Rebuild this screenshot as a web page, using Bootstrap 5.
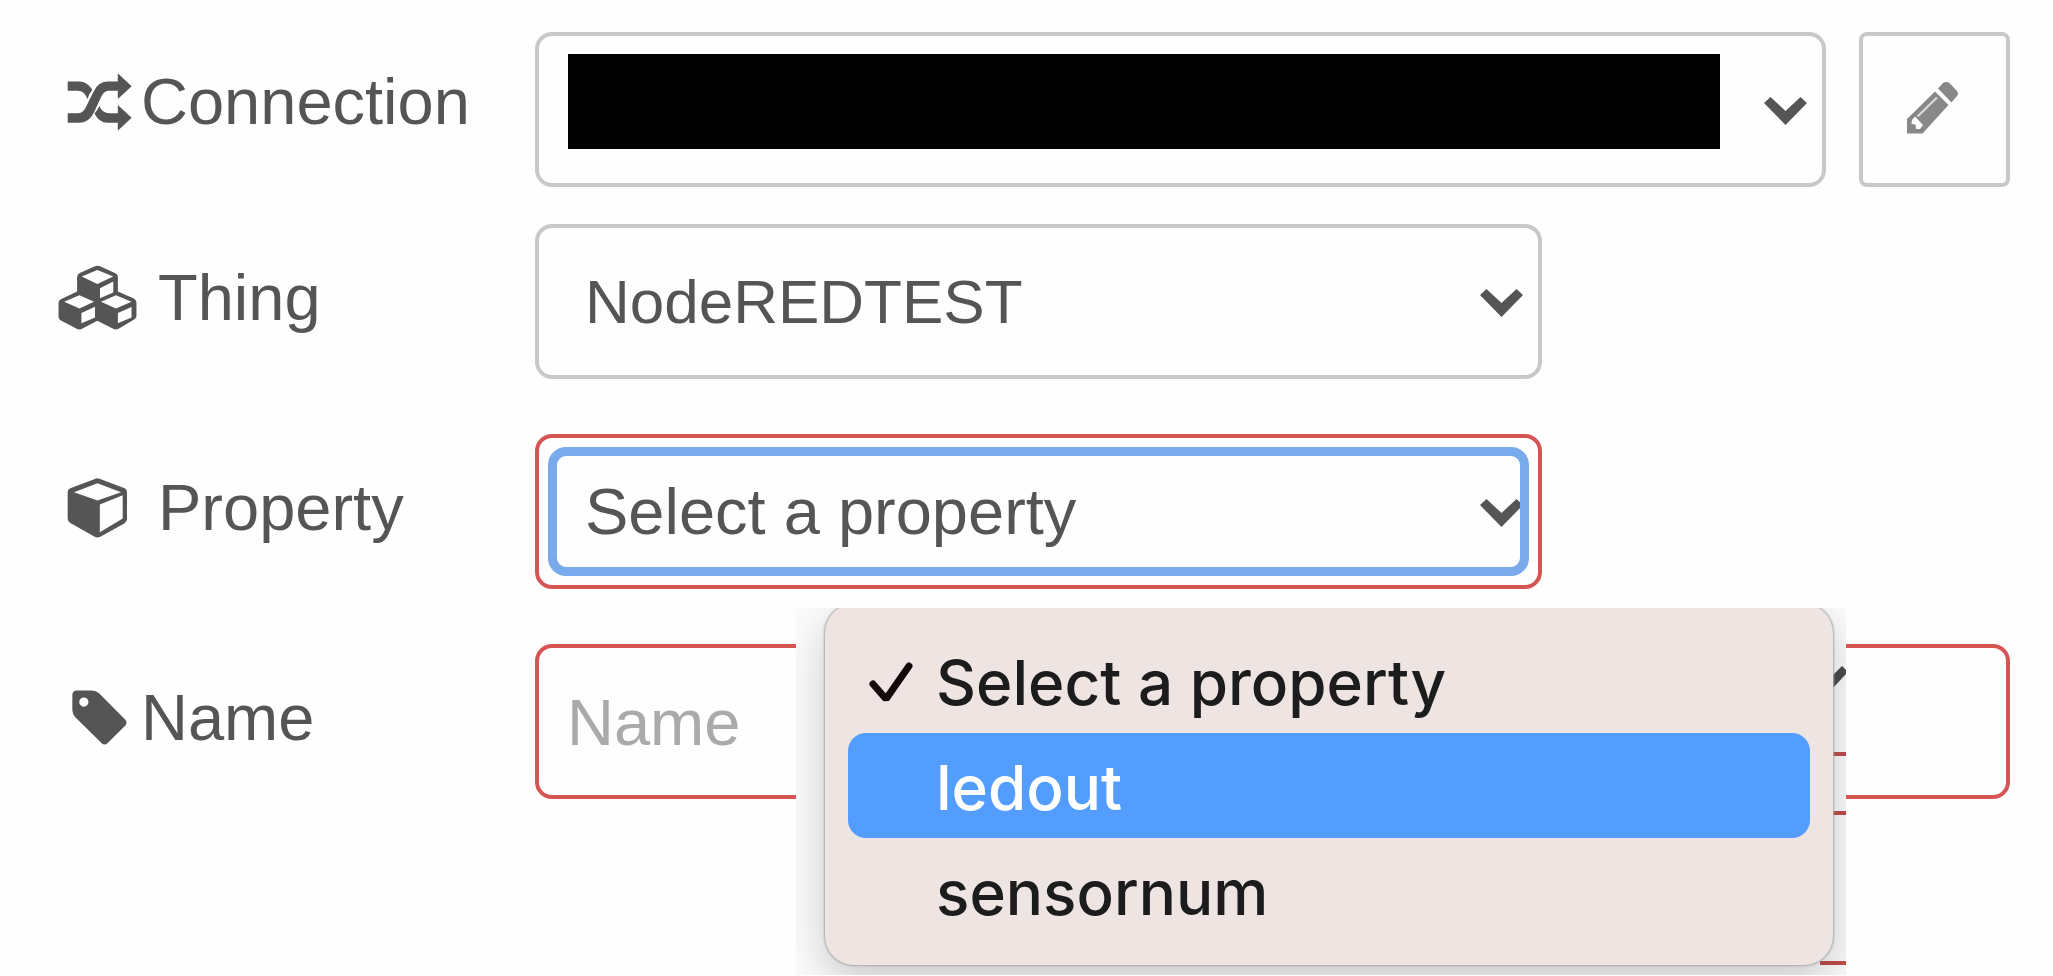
<!DOCTYPE html>
<html lang="en">
<head>
<meta charset="utf-8">
<meta name="viewport" content="width=device-width, initial-scale=1">
<title>Edit property node</title>
<link rel="stylesheet" href="https://cdn.jsdelivr.net/npm/bootstrap@5.3.0/dist/css/bootstrap.min.css">
<style>
  :root { --ink: #555; --line: #c8c8c8; --invalid: #d65454; }
  body { background: #fefefe; color: var(--ink); font: 65px/1 "Liberation Sans", Arial, sans-serif; }
  .node-form { padding: 32px 43px 0 58px; }
  .form-line { display: grid; grid-template-columns: 477px minmax(0, 1fr); }
  .form-line + .form-line { margin-top: 55px; }
  .form-line + .form-line.tight { margin-top: 37px; }
  .line-label { padding-bottom: 8px; }
  .line-label.raised { padding-bottom: 16px; }
  .label-icon { width: 83px; flex: none; display: flex; justify-content: center; }
  .spaced .label-icon { width: 79px; margin-right: 21px; }
  .node-form .form-select, .node-form .form-control {
    height: 155px; border: 4px solid var(--line); border-radius: 17px; color: var(--ink);
    background-color: #fefefe; font-size: 65px; line-height: 75px; box-shadow: none;
  }
  .node-form .form-select {
    padding: 0 60px 0 46px; background-size: 43px 28px; background-position: right 15px top 61px;
    background-image: url("data:image/svg+xml,%3Csvg xmlns='http://www.w3.org/2000/svg' viewBox='0 0 43 28'%3E%3Cpath fill='%23555' d='M0 6 6.500 0 21.500 14 36.500 0 43 6 21.500 28z'/%3E%3C/svg%3E");
  }
  .node-form .form-control { padding: 2px 28px 0; }
  .node-form .form-control::placeholder { color: #aaa; opacity: 1; }
  .node-form .compact-value { font-size: 62px; }
  .node-form .input-error { border-color: var(--invalid); }
  .part-width { width: calc(68% + 4px); }
  .redaction { left: 33px; right: 106px; top: 22px; height: 95px; background: #000; }
  .edit-btn { width: 151px; height: 155px; margin-left: 33px; border: 4px solid var(--line); border-radius: 8px; color: #888; background: #fefefe; padding: 0 4px 4px 0; flex: none; }
  .focus-frame { inset: 13px; border: 9px solid #78aaec; border-radius: 18px; pointer-events: none; }
  .popup-area { left: 261px; top: 174px; width: 1050px; height: 367px; overflow: hidden; background: #fbfbfb; z-index: 5; }
  .popup-area .option-menu {
    position: absolute; left: 29px; right: 13px; top: -4px; padding: 24px 23px 22px; border: 0; border-radius: 29px;
    background: #eee5e3; box-shadow: 0 0 2px 1px #aaa, 0 16px 44px rgba(0,0,0,.2);
    font: 500 62px/1 Inter, sans-serif;
  }
  .option-menu .dropdown-item { height: 105px; padding: 4px 21px 0; border-radius: 18px; color: #1c1c1c; font-weight: 500; display: flex; align-items: center; gap: 23px; }
  .option-menu .dropdown-item.active { background: #529dff; color: #fff; }
  .tick-slot { width: 44px; height: 42px; flex: none; }
  .rule-end { right: 0; width: 50px; height: 4px; background: #c04c4c; }
  .rule-a { top: 144px; } .rule-b { top: 203px; } .rule-c { top: 353px; width: 26px; }
  .arrow-end { right: 0; top: 58px; }
</style>
</head>
<body class="min-vh-100">
<form class="node-form min-vh-100">
  <div class="form-line">
    <label class="line-label raised d-flex align-items-center" for="connection">
      <span class="label-icon"><svg width="65" height="58" viewBox="80 147 197 176" fill="currentColor" aria-hidden="true"><path d="M82 173H118Q140 173 157 198 148 208 142 226 133 201 112 201H82ZM82 269H114Q130 269 140 245L160 205Q174 173 202 173H234V148L276 187 234 226V201H206Q190 201 181 225L162 266Q147 298 116 298H82ZM178 247Q187 269 208 269H234V244L276 283 234 322V298H202Q178 298 163 270 171 262 178 247Z"/></svg></span>Connection
    </label>
    <div class="d-flex">
      <div class="position-relative flex-grow-1">
        <select class="form-select" id="connection"><option></option></select>
        <div class="redaction position-absolute"></div>
      </div>
      <button type="button" class="btn edit-btn" aria-label="Edit connection">
        <svg width="52" height="52" viewBox="0 0 52 52" aria-hidden="true"><path fill="currentColor" d="M31 6.500 36 1Q39.500-1 43 1.500L50 9Q52 12 50 14L44.500 20.500ZM28 9.500 41.500 23 15.500 51.500H0V37Z"/><path fill="#fefefe" d="M8 34.500 16 43 13 47H9L8.500 42.500 4.500 42 5 38Z"/><path d="M10.500 34.500 30 15.500" stroke="#ddd" stroke-width="2"/></svg>
      </button>
    </div>
  </div>

  <div class="form-line tight">
    <label class="line-label spaced d-flex align-items-center" for="thing">
      <span class="label-icon"><svg width="79" height="65" viewBox="54 735 237 196" aria-hidden="true"><path fill="currentColor" d="M165 739Q172 735 180 739L225 759Q234 763 234 772V815L282 836Q290 840 290 849V888Q290 895 283 899L236 927Q228 932 220 927L172 903 126 927Q118 932 110 927L62 902Q55 898 55 890V850Q55 841 62 838L111 815V772Q111 763 119 759Z"/><path fill="#fefefe" d="M125 770 172 750 220 770 172 792ZM180 805 220 785V818L180 835ZM72 846 118 826 162 846 118 866ZM124 880 165 861V893L124 911ZM183 846 228 826 275 846 228 866ZM234 880 275 862V893L234 911Z"/></svg></span>Thing
    </label>
    <div><select class="form-select part-width compact-value" id="thing"><option>NodeREDTEST</option></select></div>
  </div>

  <div class="form-line">
    <label class="line-label spaced d-flex align-items-center" for="property">
      <span class="label-icon"><svg width="61" height="60" viewBox="82 122 182 181" aria-hidden="true"><path fill="currentColor" d="M167 124Q173 122 179 124L255 153Q262 156 262 165V246Q262 254 254 259L180 300Q173 303 166 300L91 258Q83 253 83 245V164Q83 156 91 153Z"/><path fill="#fefefe" d="M102 165 173 138 244 165 173 190ZM180 202 249 174V244L180 286Z"/></svg></span>Property
    </label>
    <div class="position-relative">
      <div class="position-relative part-width">
        <select class="form-select input-error" id="property"><option>Select a property</option><option>ledout</option><option>sensornum</option></select>
        <div class="focus-frame position-absolute"></div>
      </div>
      <div class="popup-area position-absolute">
        <div class="rule-end rule-a position-absolute"></div>
        <div class="rule-end rule-b position-absolute"></div>
        <div class="rule-end rule-c position-absolute"></div>
        <svg class="arrow-end position-absolute" width="14" height="24" viewBox="0 0 14 24" aria-hidden="true"><path d="M0 10 10 0 14 4V8L0 23Z" fill="#4b4b4b"/></svg>
        <div class="option-menu dropdown-menu show">
          <button type="button" class="dropdown-item"><svg class="tick-slot" viewBox="0 0 44 42" aria-hidden="true"><path d="M4 22 17 37 40 4" fill="none" stroke="#150808" stroke-width="7" stroke-linecap="round" stroke-linejoin="bevel"/></svg>Select a property</button>
          <button type="button" class="dropdown-item active"><span class="tick-slot"></span>ledout</button>
          <button type="button" class="dropdown-item"><span class="tick-slot"></span>sensornum</button>
        </div>
      </div>
    </div>
  </div>

  <div class="form-line">
    <label class="line-label d-flex align-items-center" for="name">
      <span class="label-icon"><svg width="55" height="55" viewBox="95 753 167 166" aria-hidden="true"><path fill="currentColor" fill-rule="evenodd" d="M110 754H155Q168 754 178 763L257 843Q264 851 257 860L202 915Q194 921 186 915L105 835Q96 825 96 813V768Q96 754 110 754ZM131 775A14 14 0 1 0 131 803 14 14 0 1 0 131 775Z"/></svg></span>Name
    </label>
    <input type="text" class="form-control input-error" id="name" placeholder="Name">
  </div>
</form>
<script src="https://cdn.jsdelivr.net/npm/bootstrap@5.3.0/dist/js/bootstrap.bundle.min.js"></script>
</body>
</html>
